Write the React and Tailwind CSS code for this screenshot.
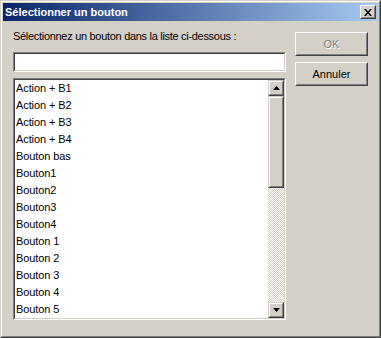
import React from "react";

const items = [
  "Action + B1",
  "Action + B2",
  "Action + B3",
  "Action + B4",
  "Bouton bas",
  "Bouton1",
  "Bouton2",
  "Bouton3",
  "Bouton4",
  "Bouton 1",
  "Bouton 2",
  "Bouton 3",
  "Bouton 4",
  "Bouton 5",
];

function PushButton({ children, className = "" }) {
  return (
    <div
      className={`border border-t-white border-l-white border-r-[#404040] border-b-[#404040] bg-[#d4d0c8] ${className}`}
    >
      <div className="w-full h-full border border-t-[#d4d0c8] border-l-[#d4d0c8] border-r-[#808080] border-b-[#808080] flex items-center justify-center">
        {children}
      </div>
    </div>
  );
}

function ScrollPart({ children, className = "" }) {
  return (
    <div
      className={`border border-t-[#d4d0c8] border-l-[#d4d0c8] border-r-[#404040] border-b-[#404040] bg-[#d4d0c8] ${className}`}
    >
      <div className="w-full h-full border border-t-white border-l-white border-r-[#808080] border-b-[#808080] flex items-center justify-center">
        {children}
      </div>
    </div>
  );
}

function Sunken({ children, className = "" }) {
  return (
    <div
      className={`border border-t-[#808080] border-l-[#808080] border-r-white border-b-white ${className}`}
    >
      <div className="w-full h-full border border-t-[#404040] border-l-[#404040] border-r-[#d4d0c8] border-b-[#d4d0c8] bg-white">
        {children}
      </div>
    </div>
  );
}

export default function App() {
  return (
    <div
      className="w-[381px] h-[338px] border border-t-[#d4d0c8] border-l-[#d4d0c8] border-r-[#404040] border-b-[#404040] bg-[#d4d0c8] text-[11px] text-black"
      style={{ fontFamily: '"Liberation Sans", Arial, sans-serif' }}
    >
      <div className="w-full h-full border border-t-white border-l-white border-r-[#808080] border-b-[#808080] p-px flex flex-col">
        {/* Title bar */}
        <div className="h-[18px] shrink-0 bg-[linear-gradient(to_right,#0a246a,#a6caf0)] flex items-center justify-between pl-[2px] pr-[2px]">
          <span className="text-white font-bold text-[11px] leading-[13px]">Sélectionner un bouton</span>
          <PushButton className="w-[16px] h-[14px]">
            <svg width="8" height="7" viewBox="0 0 8 7">
              <path d="M0 0h2l2 2.5L6 0h2L5 3.5 8 7H6L4 4.5 2 7H0l3-3.5z" fill="#000" />
            </svg>
          </PushButton>
        </div>

        {/* Body */}
        <div className="flex flex-1 pl-[10px] pr-[10px] pt-[9px] gap-[9px]">
          <div className="w-[273px] flex flex-col">
            <div className="h-[13px] leading-[13px] tracking-[-0.3px] whitespace-nowrap">
              Sélectionnez un bouton dans la liste ci-dessous :
            </div>
            <Sunken className="h-[20px] mt-[9px]" />
            <Sunken className="h-[242px] mt-[6px]">
              <div className="flex h-full">
                <div className="flex-1 flex flex-col pl-px">
                  {items.map((it) => (
                    <div key={it} className="h-[17px] leading-[17px] whitespace-nowrap tracking-[-0.1px]">
                      {it}
                    </div>
                  ))}
                </div>
                <div className="w-[16px] flex flex-col">
                  <ScrollPart className="h-[16px] shrink-0">
                    <svg width="7" height="4" viewBox="0 0 7 4">
                      <path d="M3.5 0L7 4H0z" fill="#000" />
                    </svg>
                  </ScrollPart>
                  <ScrollPart className="h-[92px] shrink-0" />
                  <div className="flex-1 bg-[repeating-conic-gradient(#d4d0c8_0%_25%,#ffffff_0%_50%)] bg-[length:2px_2px]" />
                  <ScrollPart className="h-[16px] shrink-0">
                    <svg width="7" height="4" viewBox="0 0 7 4">
                      <path d="M0 0h7L3.5 4z" fill="#000" />
                    </svg>
                  </ScrollPart>
                </div>
              </div>
            </Sunken>
          </div>
          <div className="w-[73px] flex flex-col pt-[2px] gap-[6px]">
            <PushButton className="h-[24px]">
              <span className="text-[#808080] [text-shadow:1px_1px_0_#ffffff]">OK</span>
            </PushButton>
            <PushButton className="h-[24px]">
              <span>Annuler</span>
            </PushButton>
          </div>
        </div>
      </div>
    </div>
  );
}
